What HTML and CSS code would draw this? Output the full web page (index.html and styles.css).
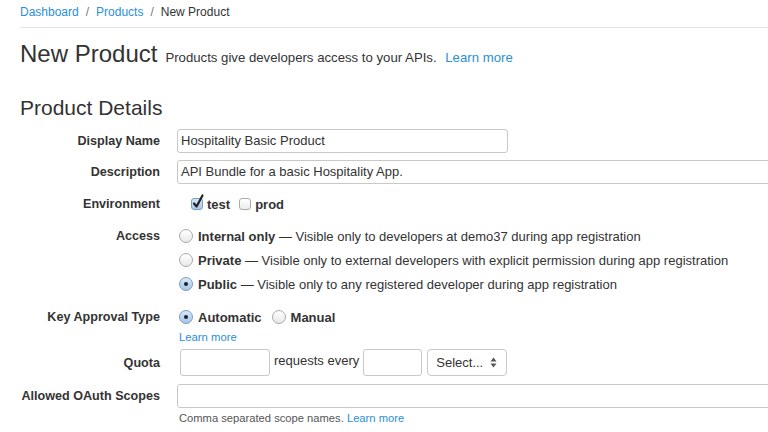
FILE: index.html
```html
<!DOCTYPE html>
<html>
<head>
<meta charset="utf-8">
<link rel="stylesheet" href="styles.css">
</head>
<body>
<div class="page">
  <nav class="crumbs">
    <a href="#">Dashboard</a><span class="sep">/</span><a href="#">Products</a><span class="sep">/</span><span class="cur">New Product</span>
  </nav>
  <header class="title">
    <h1>New Product</h1>
    <p class="sub">Products give developers access to your APIs. <a href="#">Learn more</a></p>
  </header>
  <h2>Product Details</h2>
  <form class="form">
    <div class="row r-name">
      <label class="lbl">Display Name</label>
      <div class="ctl"><div class="input w-name">Hospitality Basic Product</div></div>
    </div>
    <div class="row r-desc">
      <label class="lbl">Description</label>
      <div class="ctl"><div class="input w-full">API Bundle for a basic Hospitality App.</div></div>
    </div>
    <div class="row r-env">
      <label class="lbl">Environment</label>
      <div class="ctl env">
        <span class="opt"><span class="cb checked"><svg width="14" height="16" viewBox="0 0 14 16"><path d="M3 9.5 L5.6 12.5 L11.5 1.5" fill="none" stroke="#222" stroke-width="2.2" stroke-linecap="round" stroke-linejoin="round"/></svg></span>test</span>
        <span class="opt"><span class="cb"></span>prod</span>
      </div>
    </div>
    <div class="row r-access">
      <label class="lbl">Access</label>
      <div class="ctl radios">
        <div class="ropt"><span class="rd"></span><b>Internal only</b>&nbsp;— Visible only to developers at demo37 during app registration</div>
        <div class="ropt"><span class="rd"></span><b>Private</b>&nbsp;— Visible only to external developers with explicit permission during app registration</div>
        <div class="ropt"><span class="rd on"></span><b>Public</b>&nbsp;— Visible only to any registered developer during app registration</div>
      </div>
    </div>
    <div class="row r-key">
      <label class="lbl">Key Approval Type</label>
      <div class="ctl">
        <div class="keyopts"><span class="ropt"><span class="rd on"></span><b>Automatic</b></span><span class="ropt"><span class="rd"></span><b>Manual</b></span></div>
      </div>
    </div>
    <div class="row r-learn">
      <span></span>
      <div class="ctl"><a href="#" class="small">Learn more</a></div>
    </div>
    <div class="row r-quota">
      <label class="lbl">Quota</label>
      <div class="ctl quota">
        <div class="input q1"></div>
        <span class="qtext">requests every</span>
        <div class="input q2"></div>
        <div class="select">Select...<svg width="7" height="11" viewBox="0 0 7 11"><path d="M3.5 0.5 L6.5 4.5 H0.5 Z M3.5 10.5 L6.5 6.5 H0.5 Z" fill="#555"/></svg></div>
      </div>
    </div>
    <div class="row r-oauth">
      <label class="lbl">Allowed OAuth Scopes</label>
      <div class="ctl"><div class="input w-full"></div></div>
    </div>
    <div class="row r-help">
      <span></span>
      <div class="ctl help">Comma separated scope names. <a href="#">Learn more</a></div>
    </div>
  </form>
</div>
</body>
</html>
```
FILE: styles.css
```css
html, body { margin: 0; padding: 0; background: #fff; }
body {
  font-family: "Liberation Sans", Arial, sans-serif;
  font-size: 13px;
  color: #333;
  overflow: hidden;
  width: 768px;
  height: 432px;
}
a { color: #2a8fd6; text-decoration: none; }
.page { padding-left: 20px; }

.crumbs {
  height: 27px;
  line-height: 25px;
  font-size: 12px;
  border-bottom: 1px solid #e4e4e4;
  display: flex;
  align-items: flex-start;
}
.crumbs .sep { color: #777; margin: 0 7px; }
.crumbs .cur { color: #333; }

.title {
  display: flex;
  align-items: baseline;
  margin-top: 11px;
  height: 30px;
}
.title h1 {
  margin: 0;
  font-size: 24px;
  font-weight: normal;
  line-height: 30px;
  color: #333;
}
.title .sub { margin: 0 0 0 8px; font-size: 13.2px; }
.title .sub a { margin-left: 5px; }

h2 {
  margin: 26px 0 0 0;
  font-size: 21px;
  font-weight: normal;
  line-height: 26px;
  color: #333;
}

.form { margin-top: 8px; }
.row {
  display: grid;
  grid-template-columns: 140px 1fr;
  column-gap: 17px;
  align-items: center;
}
.lbl { text-align: right; font-weight: bold; font-size: 12.6px; white-space: nowrap; }
.ctl { white-space: nowrap; }

.input {
  box-sizing: border-box;
  height: 24px;
  border: 1px solid #c8c8c8;
  border-radius: 3px;
  padding: 0 3px;
  line-height: 22px;
  font-size: 13px;
  color: #333;
  background: #fff;
}
.w-name { width: 331px; }
.w-full { width: 640px; }

.r-desc { margin-top: 7px; }
.r-env { margin-top: 8px; height: 24px; }
.env { display: flex; align-items: center; padding-left: 14px; }
.opt { display: inline-flex; align-items: center; font-weight: bold; margin-right: 9px; }
.cb {
  position: relative;
  box-sizing: border-box;
  width: 12px; height: 12px;
  border: 1px solid #a9a9a9;
  border-radius: 3px;
  background: linear-gradient(#fff, #ececec);
  margin-right: 4px;
}
.cb.checked { background: linear-gradient(#d6e6f6, #a9c8ea); border-color: #7b9cc4; }
.cb svg { position: absolute; left: -1px; top: -5px; }

.r-access { margin-top: 8px; align-items: start; }
.r-access .lbl { line-height: 24px; }
.ropt { display: flex; align-items: center; height: 24px; }
.ropt b { font-weight: bold; }
.rd {
  box-sizing: border-box;
  width: 14px; height: 14px;
  border-radius: 50%;
  border: 1px solid #a9a9a9;
  background: linear-gradient(#fff, #e8e8e8);
  margin: 0 5px 0 2px;
  display: inline-flex; align-items: center; justify-content: center;
}
.rd.on { background: linear-gradient(#d8e8f8, #a6c6ea); border-color: #7b9cc4; }
.rd.on::after { content: ""; width: 4px; height: 4px; border-radius: 50%; background: #222; }

.r-key { margin-top: 9px; height: 24px; }
.keyopts { display: flex; }
.keyopts .ropt { margin-right: 8px; }
.r-learn { height: 15px; }
.small { font-size: 11.3px; line-height: 15px; padding-left: 2px; }

.r-quota { margin-top: 5px; }
.quota { display: flex; align-items: center; }
.q1 { width: 90px; height: 27px; margin-left: 3px; }
.qtext { margin: 0 4px 0 4px; position: relative; top: -2px; }
.q2 { width: 59px; height: 27px; }
.select {
  box-sizing: border-box;
  height: 27px; width: 80px;
  margin-left: 5px;
  border: 1px solid #c8c8c8;
  border-radius: 4px;
  display: flex; align-items: center; justify-content: space-between;
  padding: 0 9px 0 8px;
  font-size: 13px;
  color: #333;
}
.r-oauth { margin-top: 8px; }
.help { font-size: 11.2px; color: #555; padding-left: 2px; line-height: 14px; margin-top: 3px; }
```
